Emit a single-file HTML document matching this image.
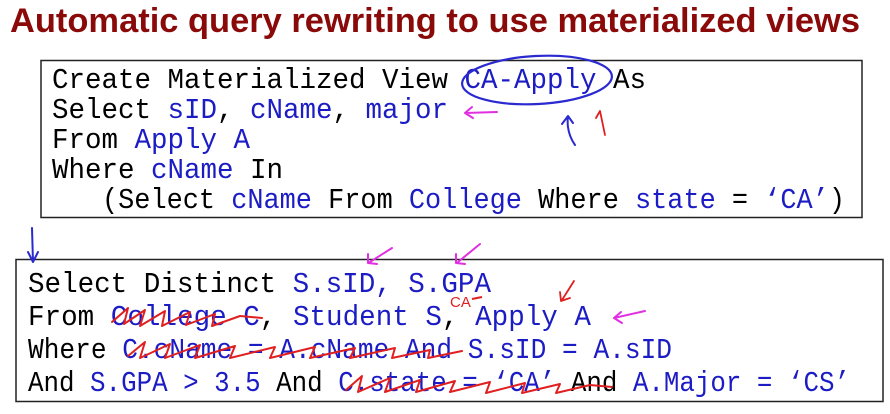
<!DOCTYPE html>
<html><head><style>
html,body{margin:0;padding:0;background:#fff;width:890px;height:414px;overflow:hidden}
svg{display:block}
.m{font-family:"Liberation Mono",monospace;font-size:29px;fill:#000}
.b{fill:#1c1cc4}
</style></head><body>
<svg width="890" height="414" viewBox="0 0 890 414" xmlns="http://www.w3.org/2000/svg">
<text x="10" y="32" font-family="Liberation Sans, sans-serif" font-weight="bold" font-size="34" fill="#8a0a0a" textLength="850" lengthAdjust="spacingAndGlyphs">Automatic query rewriting to use materialized views</text>
<rect x="41" y="60.5" width="821" height="157" fill="none" stroke="#222" stroke-width="1.5"/>
<rect x="16" y="259.5" width="867" height="142" fill="none" stroke="#222" stroke-width="1.5"/>
<g class="m" xml:space="preserve">
<text x="52" y="88" textLength="594" lengthAdjust="spacingAndGlyphs">Create Materialized View <tspan class="b">CA-Apply</tspan> As</text>
<text x="52" y="118" textLength="396" lengthAdjust="spacingAndGlyphs">Select <tspan class="b">sID</tspan>, <tspan class="b">cName</tspan>, <tspan class="b">major</tspan></text>
<text x="52" y="148" textLength="198" lengthAdjust="spacingAndGlyphs">From <tspan class="b">Apply A</tspan></text>
<text x="52" y="178" textLength="231" lengthAdjust="spacingAndGlyphs">Where <tspan class="b">cName</tspan> In</text>
<text x="102" y="208" textLength="743" lengthAdjust="spacingAndGlyphs">(Select <tspan class="b">cName</tspan> From <tspan class="b">College</tspan> Where <tspan class="b">state</tspan> = <tspan class="b">‘CA’</tspan>)</text>
<text x="28" y="292" textLength="463" lengthAdjust="spacingAndGlyphs">Select Distinct <tspan class="b">S.sID, S.GPA</tspan></text>
<text x="28" y="325" textLength="563" lengthAdjust="spacingAndGlyphs">From <tspan class="b">College C</tspan>, <tspan class="b">Student S</tspan>, <tspan class="b">Apply A</tspan></text>
<text x="28" y="358" textLength="644" lengthAdjust="spacingAndGlyphs">Where <tspan class="b">C.cName = A.cName And S.sID = A.sID</tspan></text>
<text x="28" y="391" textLength="822" lengthAdjust="spacingAndGlyphs">And <tspan class="b">S.GPA &gt; 3.5</tspan> And <tspan class="b">C.state = ‘CA’</tspan> And <tspan class="b">A.Major = ‘CS’</tspan></text>
</g>
<g fill="none" stroke-linecap="round" stroke-linejoin="round">
<ellipse cx="537" cy="80" rx="75" ry="24" transform="rotate(-3 537 80)" stroke="#2a2ad0" stroke-width="2.2"/>
<path d="M497 112 L465 113 M472 107 L465 113 L473 118" stroke="#e030e0" stroke-width="2"/>
<path d="M575 145 Q566 132 568 116 M562 124 L568 116 L573 123" stroke="#2a2ad0" stroke-width="2"/>
<path d="M605 135 L600 111 M596 118 L600 111" stroke="#e02020" stroke-width="1.8"/>
<path d="M32 228 L33 262 M28 252 L33 262 L38 252" stroke="#2a2ad0" stroke-width="2"/>
<path d="M392 248 L370 262 M368 254 L368 263 L377 264" stroke="#e030e0" stroke-width="2"/>
<path d="M480 244 L458 262 M456 254 L456 263 L465 264" stroke="#e030e0" stroke-width="2"/>
<path d="M574 281 L562 300 M560 292 L561 301 L570 298" stroke="#e02020" stroke-width="1.8"/>
<path d="M645 311 L614 318 M621 312 L614 318 L622 323" stroke="#e030e0" stroke-width="2"/>
<path d="M112 322 L128 308 L124 324 L145 310 L140 326 L165 311 L162 326 L190 312 L186 325 L215 314 L212 326 L240 316 L262 318" stroke="#e02020" stroke-width="2"/>
<path d="M128 356 L145 342 L140 358 L170 344 L165 358 L200 345 L195 358 L235 346 L230 358 L275 347 L270 358 L315 347 L310 358 L355 348 L350 358 L395 348 L392 358 L430 350 L428 358 L462 351" stroke="#e02020" stroke-width="2"/>
<path d="M346 390 L362 376 L358 392 L390 378 L385 392 L420 380 L416 392 L455 381 L450 392 L490 382 L486 393 L525 383 L522 393 L560 384 L556 393 L590 385 L612 387" stroke="#e02020" stroke-width="2"/>
</g>
<text x="450" y="307" font-family="Liberation Sans, sans-serif" font-size="15" fill="#e02020">CA</text>
<path d="M472 299 L482 297" stroke="#e02020" stroke-width="2"/>
</svg>
</body></html>
